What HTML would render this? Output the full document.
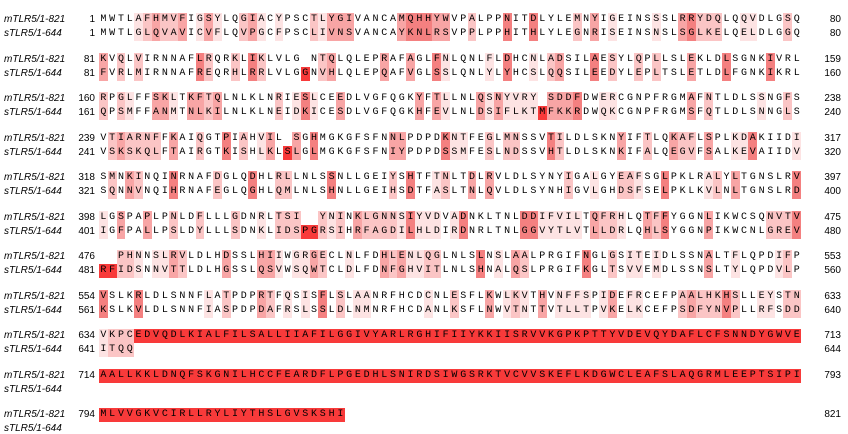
<!DOCTYPE html>
<html><head><meta charset="utf-8"><style>
html,body{margin:0;padding:0;background:#fff;width:848px;height:434px;overflow:hidden;position:relative}
.l{position:absolute;left:4px;font:italic 10px/14px "Liberation Sans",sans-serif;color:#000;white-space:pre}
.n{position:absolute;font:10px/14px "Liberation Sans",sans-serif;color:#000;text-align:right}
.a{left:60px;width:35px}
.e{left:800px;width:41px}
.q{position:absolute;left:100.4px;font:10px/14px "Liberation Mono",monospace;letter-spacing:2.775px;color:#000;white-space:pre;z-index:2}
.c{position:absolute;height:14px;width:8.9px;z-index:1}
</style></head><body>
<div id="bg"></div>

<div class="l" style="top:13px">mTLR5/1-821</div><div class="l" style="top:27px">sTLR5/1-644</div>
<div class="n a" style="top:13px">1</div><div class="n a" style="top:27px">1</div>
<div class="q" style="top:13px">MWTLAFHMVFIGSYLQGIACYPSCTLYGIVANCAMQHHYWVPALPPNITDLYLEMNYIGEINSSSLRRYDQLQQVDLGSQ</div>
<div class="q" style="top:27px">MWTLGLQVAVICVFLQVPGCFPSCLIVNSVANCAYKNLRSVPPLPPHITHLYLEGNRISEINSNSLSGLKELQELDLGGQ</div>
<div class="n e" style="top:13px">80</div><div class="n e" style="top:27px">80</div>

<div class="l" style="top:52.5px">mTLR5/1-821</div><div class="l" style="top:66.5px">sTLR5/1-644</div>
<div class="n a" style="top:52.5px">81</div><div class="n a" style="top:66.5px">81</div>
<div class="q" style="top:52.5px">KVQLVIRNNAFLRQRKLIKLVLG NTQLQLEPRAFAGLFNLQNLFLDHCNLADSILAESYLQPLLSLEKLDLSGNKIVRL</div>
<div class="q" style="top:66.5px">FVRLMIRNNAFREQRHLRRLVLGGNVHLQLEPQAFVGLSSLQNLYLYHCSLQQSILEEDYLEPLTSLETLDLFGNKIKRL</div>
<div class="n e" style="top:52.5px">159</div><div class="n e" style="top:66.5px">160</div>

<div class="l" style="top:92px">mTLR5/1-821</div><div class="l" style="top:106px">sTLR5/1-644</div>
<div class="n a" style="top:92px">160</div><div class="n a" style="top:106px">161</div>
<div class="q" style="top:92px">RPGLFFSKLTKFTQLNLKLNRIESLCEEDLVGFQGKYFTLLNLQSNYVRY SDDFDWERCGNPFRGMAFNTLDLSSNGFS</div>
<div class="q" style="top:106px">QPSMFFANMTNLKILNLKLNEIDKICESDLVGFQGKHFEVLNLDSIFLKTMFKKRDWQKCGNPFRGMSFQTLDLSNNGLS</div>
<div class="n e" style="top:92px">238</div><div class="n e" style="top:106px">240</div>

<div class="l" style="top:131.5px">mTLR5/1-821</div><div class="l" style="top:145.5px">sTLR5/1-644</div>
<div class="n a" style="top:131.5px">239</div><div class="n a" style="top:145.5px">241</div>
<div class="q" style="top:131.5px">VTIARNFFKAIQGTPIAHVIL SGHMGKGFSFNNLPDPDKNTFEGLMNSSVTILDLSKNYIFTLQKAFLSPLKDAKIIDI</div>
<div class="q" style="top:145.5px">VSKSKQLFTAIRGTKISHLKLSLGLMGKGFSFNIYPDPDSSMFESLNDSSVHTLDLSKNKIFALQEGVFSALKEVAIIDV</div>
<div class="n e" style="top:131.5px">317</div><div class="n e" style="top:145.5px">320</div>

<div class="l" style="top:171px">mTLR5/1-821</div><div class="l" style="top:185px">sTLR5/1-644</div>
<div class="n a" style="top:171px">318</div><div class="n a" style="top:185px">321</div>
<div class="q" style="top:171px">SMNKINQINRNAFDGLQDHLRLLNLSSNLLGEIYSHTFTNLTDLRVLDLSYNYIGALGYEAFSGLPKLRALYLTGNSLRV</div>
<div class="q" style="top:185px">SQNNVNQIHRNAFEGLQGHLQMLNLSHNLLGEIHSDTFASLTNLQVLDLSYNHIGVLGHDSFSELPKLKVLNLTGNSLRD</div>
<div class="n e" style="top:171px">397</div><div class="n e" style="top:185px">400</div>

<div class="l" style="top:210.5px">mTLR5/1-821</div><div class="l" style="top:224.5px">sTLR5/1-644</div>
<div class="n a" style="top:210.5px">398</div><div class="n a" style="top:224.5px">401</div>
<div class="q" style="top:210.5px">LGSPAPLPNLDFLLLGDNRLTSI  YNINKLGNNSIYVDVADNKLTNLDDIFVILTQFRHLQTFFYGGNLIKWCSQNVTV</div>
<div class="q" style="top:224.5px">IGFPALLPSLDYLLLSDNKLIDSPGRSIHRFAGDILHLDIRDNRLTNLGGVYTLVTLLDRLQHLSYGGNPIKWCNLGREV</div>
<div class="n e" style="top:210.5px">475</div><div class="n e" style="top:224.5px">480</div>

<div class="l" style="top:250px">mTLR5/1-821</div><div class="l" style="top:264px">sTLR5/1-644</div>
<div class="n a" style="top:250px">476</div><div class="n a" style="top:264px">481</div>
<div class="q" style="top:250px">  PHNNSLRVLDLHDSSLHIIWGRGECLNLFDHLENLQGLNLSLNSLAALPRGIFNGLGSITEIDLSSNALTFLQPDIFP</div>
<div class="q" style="top:264px">RFIDSNNVTTLDLHGSSLQSVWSQWTCLDLFDNFGHVITLNLSHNALQSLPRGIFKGLTSVVEMDLSSNSLTYLQPDVLP</div>
<div class="n e" style="top:250px">553</div><div class="n e" style="top:264px">560</div>

<div class="l" style="top:289.5px">mTLR5/1-821</div><div class="l" style="top:303.5px">sTLR5/1-644</div>
<div class="n a" style="top:289.5px">554</div><div class="n a" style="top:303.5px">561</div>
<div class="q" style="top:289.5px">VSLKRLDLSNNFLATPDPRTFQSISFLSLAANRFHCDCNLESFLKWLKVTHVNFFSPIDEFRCEFPAALHKHSLLEYSTN</div>
<div class="q" style="top:303.5px">KSLKVLDLSNNFIASPDPDAFRSLSSLDLNMNRFHCDANLKSFLNWVTNTTVTLLTPVKELKCEFPSDFYNVPLLRFSDD</div>
<div class="n e" style="top:289.5px">633</div><div class="n e" style="top:303.5px">640</div>

<div class="l" style="top:329px">mTLR5/1-821</div><div class="l" style="top:343px">sTLR5/1-644</div>
<div class="n a" style="top:329px">634</div><div class="n a" style="top:343px">641</div>
<div class="q" style="top:329px">VKPCEDVQDLKIALFILSALLIIAFILGGIVYARLRGHIFIIYKKIISRVVKGPKPTTYVDEVQYDAFLCFSNNDYGWVE</div>
<div class="q" style="top:343px">ITQQ</div>
<div class="n e" style="top:329px">713</div><div class="n e" style="top:343px">644</div>

<div class="l" style="top:368.5px">mTLR5/1-821</div><div class="l" style="top:382.5px">sTLR5/1-644</div>
<div class="n a" style="top:368.5px">714</div>
<div class="q" style="top:368.5px">AALLKKLDNQFSKGNILHCCFEARDFLPGEDHLSNIRDSIWGSRKTVCVVSKEFLKDGWCLEAFSLAQGRMLEEPTSIPI</div>
<div class="n e" style="top:368.5px">793</div>

<div class="l" style="top:408px">mTLR5/1-821</div><div class="l" style="top:422px">sTLR5/1-644</div>
<div class="n a" style="top:408px">794</div>
<div class="q" style="top:408px">MLVVGKVCIRLLRYLIYTHSLGVSKSHI</div>
<div class="n e" style="top:408px">821</div>

<script>
(function(){
var C=["","#fde3e3","#fbc5c5","#f8a5a5","#f48080","#f83a3a"];
var S=[
"0000123223013100231010002133300000344433002000400400002030100001003422"+"2001100020",
"3020200000042002042000"+"0r023000"+"0030030041000010400102300040200202000300"+"0400004000",
"20210033103323000000201410030000000030310003131111r33340011000000003020000010020",
"02322220300200402013"+"0r30400000"+"0003300004110020220004200000030020032203"+"0011400001",
"02032000400002000400220000400000020400120030300000000200100221004000012030000004",
"10300300200200020010222rr212032222141110140000004411111032210032400003000000222420",
"rr221011320000300033101132001000323112200004010320000004002011010000030010000120",
"40004000000010200032010104020110000001002000301210301111013011000023222420011022"
];
var bg=document.getElementById('bg'),W=8.775,X0=99;
function cell(col,top,c){var d=document.createElement('div');d.className='c';d.style.left=(X0+col*W)+'px';d.style.top=top+'px';d.style.background=c;bg.appendChild(d);}
var mg={1:[23],2:[50],3:[21],5:[23,24],6:[0,1]};
for(var b=0;b<8;b++){var s=S[b],t=13+39.5*b,g=mg[b]||[];
for(var i=0;i<80;i++){var ch=s[i];if(ch==='0'||!ch)continue;
if(ch==='r'){cell(i,t+14,C[5]);continue;}
var v=+ch;if(g.indexOf(i)<0)cell(i,t,C[v]);cell(i,t+14,C[v]);}}
var t9=13+39.5*8,sh=[1,2,2,2];
for(var i=0;i<4;i++){cell(i,t9,C[sh[i]]);cell(i,t9+14,C[sh[i]]);}
for(var i=4;i<80;i++)cell(i,t9,C[5]);
for(var i=0;i<80;i++)cell(i,13+39.5*9,C[5]);
for(var i=0;i<28;i++)cell(i,13+39.5*10,C[5]);
})();
</script>
</body></html>
